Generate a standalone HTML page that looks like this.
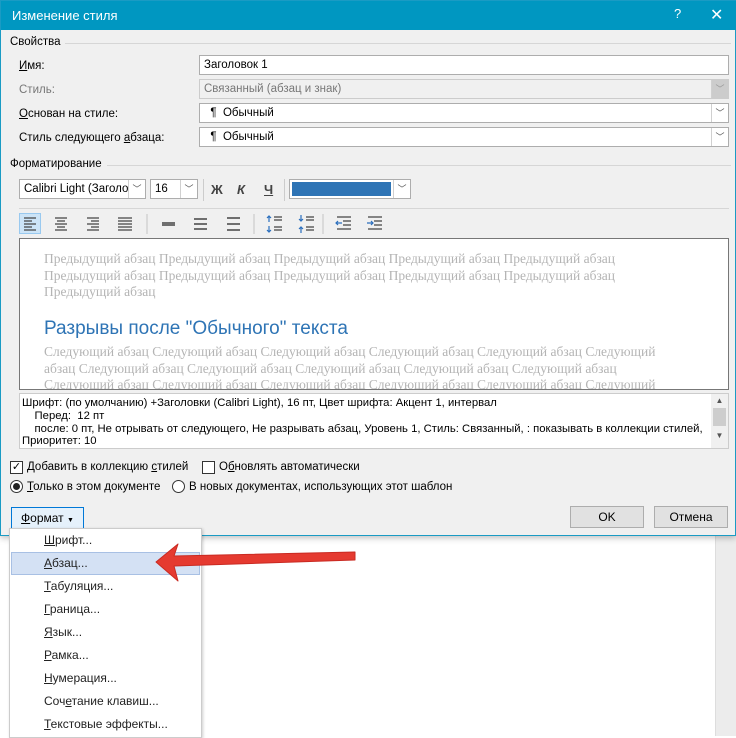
<!DOCTYPE html>
<html><head><meta charset="utf-8"><style>
*{margin:0;padding:0;box-sizing:border-box}
body{width:736px;height:736px;overflow:hidden;background:#fff;font-family:"Liberation Sans","DejaVu Sans",sans-serif;font-size:11.5px;color:#000;position:relative}
.a{position:absolute;white-space:nowrap}
.dlg{position:absolute;left:0;top:0;width:736px;height:536px;background:#f0f0f0;border:1px solid #1a9bc4;box-shadow:0 2px 6px rgba(0,0,0,.25)}
.title{position:absolute;left:0;top:0;width:736px;height:29px;background:#0097c1;color:#fff;font-size:13px}
.inp{position:absolute;background:#fff;border:1px solid #adadad;height:20px;padding:2px 4px;line-height:14px}
.dd{position:absolute;right:0;top:0;width:17px;height:18px;border-left:1px solid #d0d0d0;font-size:9px;color:#555;text-align:center;line-height:18px}
.hr{position:absolute;height:1px;background:#d6d6d6}
.btn{position:absolute;background:#e1e1e1;border:1px solid #adadad;text-align:center;line-height:20px;font-size:12px}
.pv{font-family:"Liberation Serif",serif;color:#b4b4b4;font-size:13.5px}
.mi{position:absolute;left:44px;font-size:12px;color:#222}
u{text-decoration:underline}
</style></head><body>
<div class="a" style="left:715px;top:536px;width:21px;height:200px;background:#ececec;border-left:1px solid #ddd"></div>
<div class="dlg">
<div class="title"><span class="a" style="left:11px;top:7px">Изменение стиля</span><span class="a" style="left:673px;top:5px">?</span><span class="a" style="left:709px;top:4px;font-size:16px">✕</span></div>
<span class="a" style="left:9px;top:35px">Свойства</span><div class="hr" style="left:64px;top:42px;width:666px"></div>
<span class="a" style="left:18px;top:59px"><u>И</u>мя:</span>
<div class="inp" style="left:198px;top:54px;width:530px">Заголовок 1</div>
<span class="a" style="left:18px;top:83px;color:#777">Стиль:</span>
<div class="inp" style="left:198px;top:78px;width:530px;background:#f0f0f0;border-color:#ccc;color:#777">Связанный (абзац и знак)<div class="dd" style="background:#ccc;color:#999">﹀</div></div>
<span class="a" style="left:18px;top:107px"><u>О</u>снован на стиле:</span>
<div class="inp" style="left:198px;top:102px;width:530px">&nbsp;&nbsp;¶&nbsp; Обычный<div class="dd">﹀</div></div>
<span class="a" style="left:18px;top:131px">Стиль следующего <u>а</u>бзаца:</span>
<div class="inp" style="left:198px;top:126px;width:530px">&nbsp;&nbsp;¶&nbsp; Обычный<div class="dd">﹀</div></div>
<span class="a" style="left:9px;top:157px">Форматирование</span><div class="hr" style="left:106px;top:164px;width:624px"></div>
<div class="inp" style="left:18px;top:178px;width:127px;overflow:hidden">Calibri Light (Заголов<div class="dd" style="background:#fff">﹀</div></div>
<div class="inp" style="left:149px;top:178px;width:48px">16<div class="dd" style="background:#fff">﹀</div></div>
<div class="a" style="left:202px;top:178px;width:1px;height:22px;background:#ccc"></div>
<span class="a" style="left:210px;top:181px;font-weight:bold;color:#444;font-size:13px">Ж</span>
<span class="a" style="left:236px;top:181px;font-weight:bold;font-style:italic;color:#444;font-size:13px">К</span>
<span class="a" style="left:263px;top:181px;font-weight:bold;text-decoration:underline;color:#444;font-size:13px">Ч</span>
<div class="a" style="left:283px;top:178px;width:1px;height:22px;background:#ccc"></div>
<div class="inp" style="left:288px;top:178px;width:122px;padding:2px"><div style="width:99px;height:14px;background:#2e74b5"></div><div class="dd" style="background:#fff">﹀</div></div>
<div class="hr" style="left:18px;top:207px;width:710px"></div>
<div class="a" style="left:18px;top:212px;width:22px;height:21px;background:#cce4f7;border:1px solid #99c9ef"></div>
<svg class="a" style="left:0;top:0" width="400" height="240" stroke="#444" stroke-width="1.2" fill="none">
<path d="M23 217h12M23 220h8M23 223h12M23 226h8M23 229h12"/>
<path d="M54 217h12M56 220h8M54 223h12M56 226h8M54 229h12"/>
<path d="M86 217h12M90 220h8M86 223h12M90 226h8M86 229h12"/>
<path d="M117 217h14M117 220h14M117 223h14M117 226h14M117 229h14"/>
<line x1="146" y1="213" x2="146" y2="233" stroke="#ccc"/>
<path d="M161 222h13M161 224h13" stroke-width="1.5"/>
<path d="M193 218h13M193 223h13M193 228h13" stroke-width="1.5"/>
<path d="M226 217h13M226 223h13M226 229h13" stroke-width="1.5"/>
<line x1="253" y1="213" x2="253" y2="233" stroke="#ccc"/>
<path d="M273 216h8M273 219h8M273 226h8M273 229h8" /><path d="M268 215v6M266 217l2-2 2 2M268 225v6M266 229l2 2 2-2" stroke="#2a6ebd"/>
<path d="M305 216h8M305 219h8M305 226h8M305 229h8"/><path d="M300 214v6M298 218l2 2 2-2M300 226v6M298 228l2-2 2 2" stroke="#2a6ebd"/>
<line x1="322" y1="213" x2="322" y2="233" stroke="#ccc"/>
<path d="M336 216h14M342 220h8M342 224h8M336 228h14"/><path d="M341 222h-6M337 220l-2 2 2 2" stroke="#2a6ebd"/>
<path d="M367 216h14M373 220h8M373 224h8M367 228h14"/><path d="M366 222h6M370 220l2 2-2 2" stroke="#2a6ebd"/>
</svg>
<div class="a" style="left:18px;top:237px;width:710px;height:152px;background:#fff;border:1px solid #777;overflow:hidden">
<div class="a pv" style="left:24px;top:12px;line-height:16.5px">Предыдущий абзац Предыдущий абзац Предыдущий абзац Предыдущий абзац Предыдущий абзац<br>Предыдущий абзац Предыдущий абзац Предыдущий абзац Предыдущий абзац Предыдущий абзац<br>Предыдущий абзац</div>
<div class="a" style="left:24px;top:79px;font-size:19px;color:#2e74b5">Разрывы после "Обычного" текста</div>
<div class="a pv" style="left:24px;top:105px;line-height:16.5px">Следующий абзац Следующий абзац Следующий абзац Следующий абзац Следующий абзац Следующий<br>абзац Следующий абзац Следующий абзац Следующий абзац Следующий абзац Следующий абзац<br>Следующий абзац Следующий абзац Следующий абзац Следующий абзац Следующий абзац Следующий</div>
</div>
<div class="a" style="left:18px;top:392px;width:710px;height:56px;background:#fff;border:1px solid #ccc;font-size:11.3px;line-height:12.8px;padding:3px 2px;overflow:hidden">
Шрифт: (по умолчанию) +Заголовки (Calibri Light), 16 пт, Цвет шрифта: Акцент 1, интервал<br>&nbsp;&nbsp;&nbsp;&nbsp;Перед: &nbsp;12 пт<br>&nbsp;&nbsp;&nbsp;&nbsp;после: 0 пт, Не отрывать от следующего, Не разрывать абзац, Уровень 1, Стиль: Связанный, : показывать в коллекции стилей,<br>Приоритет: 10
<div class="a" style="right:0;top:0;width:17px;height:54px;background:#f0f0f0;font-size:8px;color:#555;text-align:center"><div style="height:14px;line-height:14px">▲</div><div style="height:18px;background:#cdcdcd;margin:0 2px"></div><div style="line-height:20px">▼</div></div>
</div>
<div class="a" style="left:9px;top:460px;width:13px;height:13px;border:1px solid #333;background:#fff;font-size:11px;line-height:11px;text-align:center">✓</div>
<span class="a" style="left:26px;top:460px">Добавить в коллекцию <u>с</u>тилей</span>
<div class="a" style="left:201px;top:460px;width:13px;height:13px;border:1px solid #333;background:#fff"></div>
<span class="a" style="left:218px;top:460px">О<u>б</u>новлять автоматически</span>
<div class="a" style="left:9px;top:479px;width:13px;height:13px;border:1px solid #333;border-radius:50%;background:#fff"><div style="width:7px;height:7px;border-radius:50%;background:#222;margin:2px"></div></div>
<span class="a" style="left:26px;top:480px"><u>Т</u>олько в этом документе</span>
<div class="a" style="left:171px;top:479px;width:13px;height:13px;border:1px solid #333;border-radius:50%;background:#fff"></div>
<span class="a" style="left:188px;top:480px">В новых документах, использующих этот шаблон</span>
<div class="btn" style="left:10px;top:506px;width:73px;height:22px;background:#e5f1fb;border:1px solid #0078d7;line-height:20px"><u>Ф</u>ормат <span style="font-size:7px">▼</span></div>
<div class="btn" style="left:569px;top:505px;width:74px;height:22px">OK</div>
<div class="btn" style="left:653px;top:505px;width:74px;height:22px">Отмена</div>
</div>
<div class="a" style="left:9px;top:528px;width:193px;height:210px;background:#fff;border:1px solid #ccc;box-shadow:1px 1px 3px rgba(0,0,0,.2)"></div>
<div class="a" style="left:11px;top:552px;width:189px;height:23px;background:#d4e1f4;border:1px solid #a8c0e4"></div>
<span class="mi" style="top:533px"><u>Ш</u>рифт...</span>
<span class="mi" style="top:556px"><u>А</u>бзац...</span>
<span class="mi" style="top:579px"><u>Т</u>абуляция...</span>
<span class="mi" style="top:602px"><u>Г</u>раница...</span>
<span class="mi" style="top:625px"><u>Я</u>зык...</span>
<span class="mi" style="top:648px"><u>Р</u>амка...</span>
<span class="mi" style="top:671px"><u>Н</u>умерация...</span>
<span class="mi" style="top:694px">Соч<u>е</u>тание клавиш...</span>
<span class="mi" style="top:717px"><u>Т</u>екстовые эффекты...</span>
<svg class="a" style="left:150px;top:540px" width="215" height="45">
<path d="M6 22 L28 4 L24 16 L205 12 L205 20 L24 26 L28 41 Z" fill="#e53a30" stroke="#c92a22" stroke-width="1" stroke-linejoin="round"/>
</svg>
</body></html>
